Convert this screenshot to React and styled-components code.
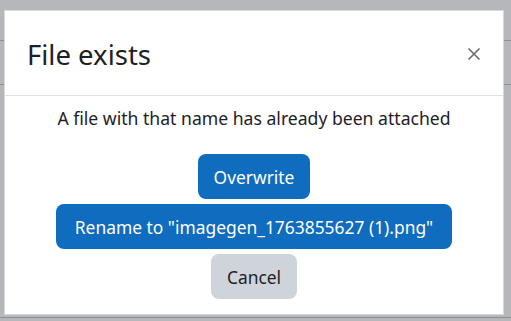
import React from 'react';
import styled, { createGlobalStyle } from 'styled-components';

const GlobalStyle = createGlobalStyle`
  html, body {
    margin: 0;
    padding: 0;
    background: #b5b7ba;
    font-family: "Noto Sans", "Open Sans", sans-serif;
    overflow: hidden;
  }
`;

// Page behind the dialog, dimmed by the backdrop
const Page = styled.div`
  height: 321px;
  display: flex;
  flex-direction: column;
`;

const PageRow = styled.div`
  height: ${(p) => p.h}px;
  border-bottom: 1px solid #8d8f92;
  flex-shrink: 0;
`;

const Backdrop = styled.div`
  position: fixed;
  inset: 0;
  padding: 10px 7px 0 4px;
`;

const Dialog = styled.div`
  width: 500px;
  height: 305px;
  box-sizing: border-box;
  background: #fff;
  border: 1px solid rgba(0, 0, 0, 0.15);
  display: flex;
  flex-direction: column;
`;

const Header = styled.div`
  box-sizing: border-box;
  height: 85px;
  border-bottom: 1px solid #dee2e6;
  display: flex;
  align-items: center;
  justify-content: space-between;
  padding: 2px 19px 0 22px;
`;

const Title = styled.h5`
  margin: 0;
  font-size: 27.5px;
  font-weight: 400;
  color: #1d2125;
  line-height: 1.2;
`;

const Close = styled.button`
  border: 0;
  background: none;
  padding: 0;
  width: 20px;
  height: 20px;
  display: flex;
  align-items: center;
  justify-content: center;
  color: #6a6a6a;
  cursor: pointer;
`;

const Body = styled.div`
  display: flex;
  flex-direction: column;
  align-items: center;
  padding-top: 9px;
`;

const Message = styled.p`
  margin: 0 0 22px;
  font-size: 17.6px;
  line-height: 27px;
  color: #1d2125;
`;

const Buttons = styled.div`
  display: flex;
  flex-direction: column;
  align-items: center;
  gap: 5px;
`;

const Button = styled.button`
  height: 45px;
  padding: 0 ${(p) => p.$pad || 16}px;
  border: 0;
  border-radius: 8px;
  font-family: inherit;
  font-size: 17.4px;
  background: ${(p) => (p.$secondary ? '#ced4da' : '#0f6cbf')};
  color: ${(p) => (p.$secondary ? '#1d2125' : '#fff')};
  cursor: pointer;
`;

const CloseIcon = () => (
  <svg width="14" height="14" viewBox="0 0 14 14">
    <path d="M1.5 1.5 L12.5 12.5 M12.5 1.5 L1.5 12.5" stroke="currentColor" strokeWidth="1.6" fill="none" />
  </svg>
);

const App = () => {
  return (
    <>
      <GlobalStyle />
      <Page>
        <PageRow h={40} />
        <PageRow h={43} />
        <PageRow h={232} />
      </Page>
      <Backdrop>
        <Dialog>
          <Header>
            <Title>File exists</Title>
            <Close aria-label="Close">
              <CloseIcon />
            </Close>
          </Header>
          <Body>
            <Message>A file with that name has already been attached</Message>
            <Buttons>
              <Button>Overwrite</Button>
              <Button $pad={19}>Rename to "imagegen_1763855627 (1).png"</Button>
              <Button $secondary>Cancel</Button>
            </Buttons>
          </Body>
        </Dialog>
      </Backdrop>
    </>
  );
};

export default App;
